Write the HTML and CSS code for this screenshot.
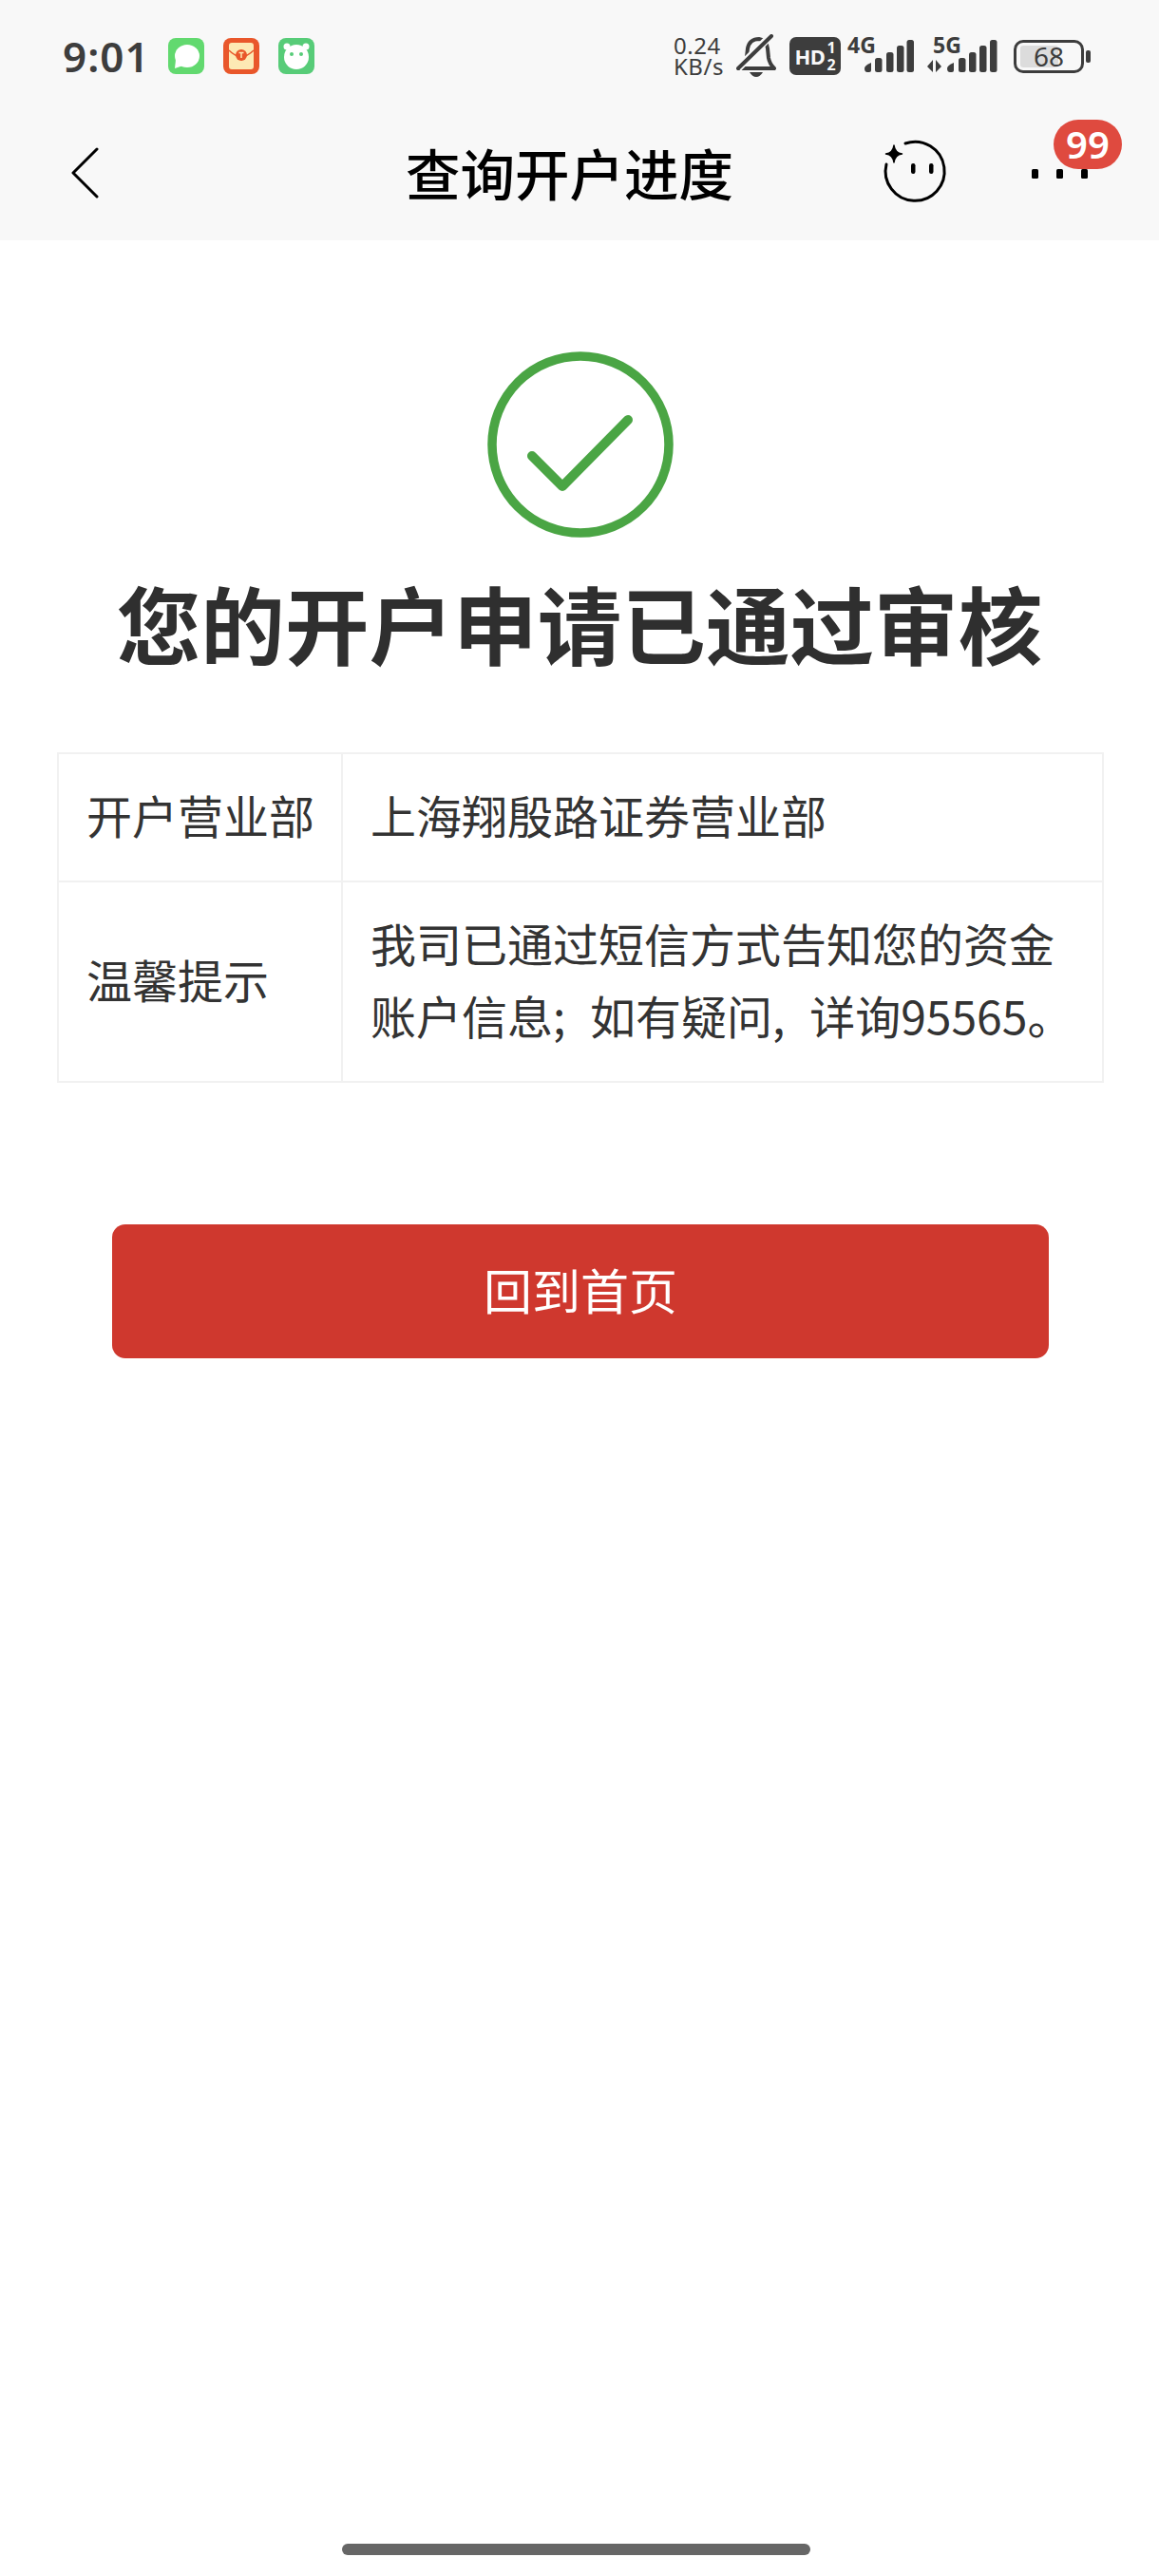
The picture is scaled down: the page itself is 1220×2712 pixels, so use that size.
FILE: index.html
```html
<!DOCTYPE html>
<html lang="zh-CN">
  <head>
    <meta charset="UTF-8" />
    <meta name="viewport" content="width=device-width, initial-scale=1.0" />
    <title>查询开户进度</title>
    <link rel="stylesheet" href="styles.css">
  </head>
  <body>
    <div class="page">
      <div class="header">
        <div class="status-bar">
          <span class="time">9:01</span>
          <div class="notify-icons">
            <svg class="app-icon" viewBox="0 0 38 38">
              <rect width="38" height="38" rx="8" fill="#62d96f" />
              <ellipse cx="20" cy="19" rx="13" ry="12" fill="#fff" />
              <path d="M8 23 L7 32 L16 29 Z" fill="#fff" />
            </svg>
            <svg class="app-icon" viewBox="0 0 38 38">
              <rect width="38" height="38" rx="8" fill="#e9572b" />
              <rect x="6" y="5" width="26" height="28" rx="3" fill="#fde9b4" />
              <path d="M6 13 Q19 26 32 13" fill="none" stroke="#e9572b" stroke-width="1.5" />
              <circle cx="19" cy="18" r="6" fill="#e9572b" />
              <path d="M16.500 15.500 H21.500 M19 15.500 V21" stroke="#fde9b4" stroke-width="1.500" />
            </svg>
            <svg class="app-icon" viewBox="0 0 38 38">
              <rect width="38" height="38" rx="8" fill="#57cc78" />
              <circle cx="9" cy="9" r="3.500" fill="#fff" />
              <circle cx="29" cy="9" r="3.500" fill="#fff" />
              <ellipse cx="19" cy="20" rx="13" ry="13" fill="#fff" />
              <circle cx="14" cy="17" r="2" fill="#57cc78" />
              <circle cx="24" cy="17" r="2" fill="#57cc78" />
            </svg>
          </div>
          <div class="status-right">
            <div class="net-speed">0.24<br>KB/s</div>
            <svg class="bell" viewBox="0 0 42 46">
              <path d="M3 36 Q10 31 11 24 L12 15 Q14 5 24 5 Q32 6 33 15 L34 25 Q35 31 40 36 Z" fill="none" stroke="#3d3d3d" stroke-width="4" stroke-linejoin="round" />
              <path d="M2 36 L37 1" stroke="#f8f8f8" stroke-width="8" />
              <path d="M2 36 L37 2" stroke="#3d3d3d" stroke-width="4" stroke-linecap="round" />
              <path d="M14 40 H28 Q25 45 21 45 Q17 45 14 40 Z" fill="#3d3d3d" />
            </svg>
            <div class="hd-badge">
              <span class="hd-text">HD</span>
              <span class="hd-sim">1<br>2</span>
            </div>
            <div class="signal signal-4g">
              <span class="net-type">4G</span>
              <svg class="bars" viewBox="0 0 52 34">
                <path d="M0 30 Q0 27 7 24 V32 Q7 34 5 34 H3 Q0 34 0 30 Z" fill="#3d3d3d" />
                <rect x="11" y="19" width="7.500" height="15" rx="2.500" fill="#3d3d3d" />
                <rect x="23" y="13" width="7.500" height="21" rx="2.500" fill="#3d3d3d" />
                <rect x="34" y="6" width="7.500" height="28" rx="2.500" fill="#3d3d3d" />
                <rect x="44.500" y="0" width="7.500" height="34" rx="2.500" fill="#3d3d3d" />
              </svg>
            </div>
            <div class="signal signal-5g">
              <span class="net-type">5G</span>
              <svg class="bars bars-wide" viewBox="0 0 74 34">
                <path d="M6 21 V34 L0 28 Z M9 21 V34 L15 28 Z" fill="#3d3d3d" />
                <path d="M21 30 Q21 27 28 24 V32 Q28 34 26 34 H24 Q21 34 21 30 Z" fill="#3d3d3d" />
                <rect x="33" y="19" width="7.500" height="15" rx="2.500" fill="#3d3d3d" />
                <rect x="44" y="13" width="7.500" height="21" rx="2.500" fill="#3d3d3d" />
                <rect x="55" y="6" width="7.500" height="28" rx="2.500" fill="#3d3d3d" />
                <rect x="66" y="0" width="7.500" height="34" rx="2.500" fill="#3d3d3d" />
              </svg>
            </div>
            <div class="battery">
              <div class="battery-body">
                <div class="battery-level"></div>
                <span class="battery-num">68</span>
              </div>
              <div class="battery-tip"></div>
            </div>
          </div>
        </div>
        <div class="nav-bar">
          <svg class="back-icon" viewBox="0 0 30 56">
            <path d="M27 3 L2 28 L27 53" fill="none" stroke="#000" stroke-width="3" stroke-linecap="round" stroke-linejoin="round" />
          </svg>
          <h1 class="nav-title">查询开户进度</h1>
          <svg class="face-icon" viewBox="0 0 72 72">
            <path d="M26 7 A31 31 0 1 1 6 29" fill="none" stroke="#000" stroke-width="3" stroke-linecap="round" />
            <path d="M14 9 Q15 17 22.500 18 Q15 19 14 27 Q13 19 5.500 18 Q13 17 14 9 Z" fill="#000" stroke="#000" stroke-width="1.500" stroke-linejoin="round" />
            <rect x="32" y="28" width="4.500" height="11" rx="2.200" fill="#000" />
            <rect x="51" y="28" width="4.500" height="11" rx="2.200" fill="#000" />
          </svg>
          <div class="more">
            <span class="more-dot"></span>
            <span class="more-dot"></span>
            <span class="more-dot"></span>
            <span class="badge">99</span>
          </div>
        </div>
      </div>

      <div class="result">
        <svg class="ok-icon" viewBox="0 0 200 200">
          <circle cx="100" cy="100" r="93" fill="none" stroke="#4aa544" stroke-width="9.500" />
          <path d="M49 112 L81 144 L150 74" fill="none" stroke="#4aa544" stroke-width="10" stroke-linecap="round" stroke-linejoin="round" />
        </svg>
        <h2 class="result-title">您的开户申请已通过审核</h2>
      </div>

      <table class="info-table">
        <tr>
          <td class="info-label">开户营业部</td>
          <td class="info-value">上海翔殷路证券营业部</td>
        </tr>
        <tr>
          <td class="info-label">温馨提示</td>
          <td class="info-value">我司已通过短信方式告知您的资金账户信息; 如有疑问, 详询95565。</td>
        </tr>
      </table>

      <button class="home-btn">回到首页</button>

      <div class="home-indicator"></div>
    </div>
  </body>
</html>
```

FILE: styles.css
```css
body {
  margin: 0;
  background: #fff;
  font-family: "Noto Sans CJK SC", "Noto Sans", sans-serif;
  color: #333;
}
.page {
  width: 1220px;
  height: 2712px;
  display: flex;
  flex-direction: column;
  overflow: hidden;
}
.header {
  height: 253px;
  background: #f8f8f8;
}
.status-bar {
  height: 118px;
  display: flex;
  align-items: center;
  padding: 0 72px 0 66px;
  color: #3d3d3d;
}
.time {
  width: 111px;
  font-family: "Noto Sans", sans-serif;
  font-size: 44px;
  font-weight: 600;
  letter-spacing: 1px;
}
.notify-icons {
  display: flex;
  gap: 20px;
}
.app-icon {
  width: 38px;
  height: 38px;
  display: block;
}
.status-right {
  margin-left: auto;
  display: flex;
  align-items: center;
}
.net-speed {
  width: 52px;
  font-family: "Noto Sans", sans-serif;
  font-size: 24px;
  line-height: 22px;
  letter-spacing: 0.5px;
  text-align: left;
  white-space: nowrap;
}
.bell {
  width: 42px;
  height: 46px;
  margin-left: 14px;
}
.hd-badge {
  width: 54px;
  height: 40px;
  margin-left: 14px;
  border-radius: 7px;
  background: #3d3d3d;
  color: #f8f8f8;
  display: flex;
  align-items: center;
  justify-content: center;
  font-family: "Noto Sans", sans-serif;
  font-weight: 700;
}
.hd-text {
  font-size: 22px;
  letter-spacing: -0.5px;
}
.hd-sim {
  margin-left: 2px;
  font-size: 16px;
  line-height: 18px;
  text-align: center;
}
.signal {
  position: relative;
  height: 40px;
  margin-top: -6px;
  display: flex;
  align-items: flex-end;
  justify-content: flex-end;
}
.signal-4g {
  width: 70px;
  margin-left: 7px;
}
.signal-5g {
  width: 74px;
  margin-left: 14px;
}
.net-type {
  position: absolute;
  left: 0;
  top: -2px;
  font-family: "Noto Sans", sans-serif;
  font-size: 23px;
  line-height: 26px;
  font-weight: 700;
}
.signal-5g .net-type {
  left: 6px;
}
.bars {
  width: 52px;
  height: 34px;
}
.bars-wide {
  width: 74px;
}
.battery {
  margin-left: 17px;
  display: flex;
  align-items: center;
}
.battery-body {
  position: relative;
  width: 74px;
  height: 35px;
  box-sizing: border-box;
  border: 3.5px solid #3d3d3d;
  border-radius: 10px;
  display: flex;
  align-items: center;
  justify-content: center;
}
.battery-level {
  position: absolute;
  left: 4px;
  top: 3px;
  bottom: 3px;
  width: 40px;
  border-radius: 3px;
  background: #dcdcdc;
}
.battery-num {
  position: relative;
  font-family: "Noto Sans", sans-serif;
  font-size: 28px;
  line-height: 1;
}
.battery-tip {
  width: 5px;
  height: 13px;
  margin-left: 2px;
  border-radius: 2px;
  background: #3d3d3d;
}
.nav-bar {
  position: relative;
  height: 135px;
  display: flex;
  align-items: center;
}
.back-icon {
  width: 30px;
  height: 56px;
  margin-left: 75px;
  margin-top: -8px;
}
.nav-title {
  margin: -10px 0 0 322px;
  width: 345px;
  font-size: 57.5px;
  line-height: 76px;
  font-weight: 500;
  color: #000;
  white-space: nowrap;
}
.face-icon {
  width: 72px;
  height: 72px;
  margin-left: 155px;
  margin-top: -11px;
}
.more {
  margin-left: 87px;
  margin-top: -5px;
  display: flex;
  gap: 19.5px;
}
.more-dot {
  width: 6.5px;
  height: 10px;
  border-radius: 1.5px;
  background: #000;
}
.badge {
  position: absolute;
  left: 1109px;
  top: 8px;
  width: 72px;
  height: 52px;
  border-radius: 26px;
  background: #df4a3f;
  color: #fff;
  font-family: "Noto Sans", sans-serif;
  font-size: 40px;
  line-height: 52px;
  font-weight: 600;
  text-align: center;
}
.result {
  display: flex;
  flex-direction: column;
  align-items: center;
  padding-top: 115px;
}
.ok-icon {
  width: 200px;
  height: 200px;
  margin-left: 2px;
}
.result-title {
  margin: 27px 0 0;
  font-size: 88.6px;
  line-height: 120px;
  font-weight: 700;
  color: #2f2f2f;
  white-space: nowrap;
}
.info-table {
  width: 1102px;
  margin: 77px 0 0 60px;
  border-collapse: collapse;
  table-layout: fixed;
  font-size: 48px;
  line-height: 76px;
  color: #333;
}
.info-table td {
  border: 2px solid #f1f1f1;
  padding: 25px 20px 32px 29px;
}
.info-label {
  width: 248px;
  white-space: nowrap;
}
.info-value {
  word-spacing: 15px;
}
.home-btn {
  width: 986px;
  height: 141px;
  margin: 149px 0 0 118px;
  padding-bottom: 6px;
  border: none;
  border-radius: 14px;
  background: #cf382e;
  color: #fff;
  font-family: inherit;
  font-size: 51px;
}
.home-indicator {
  width: 493px;
  height: 12px;
  margin: auto 0 22px 360px;
  border-radius: 6px;
  background: #666;
}
```
